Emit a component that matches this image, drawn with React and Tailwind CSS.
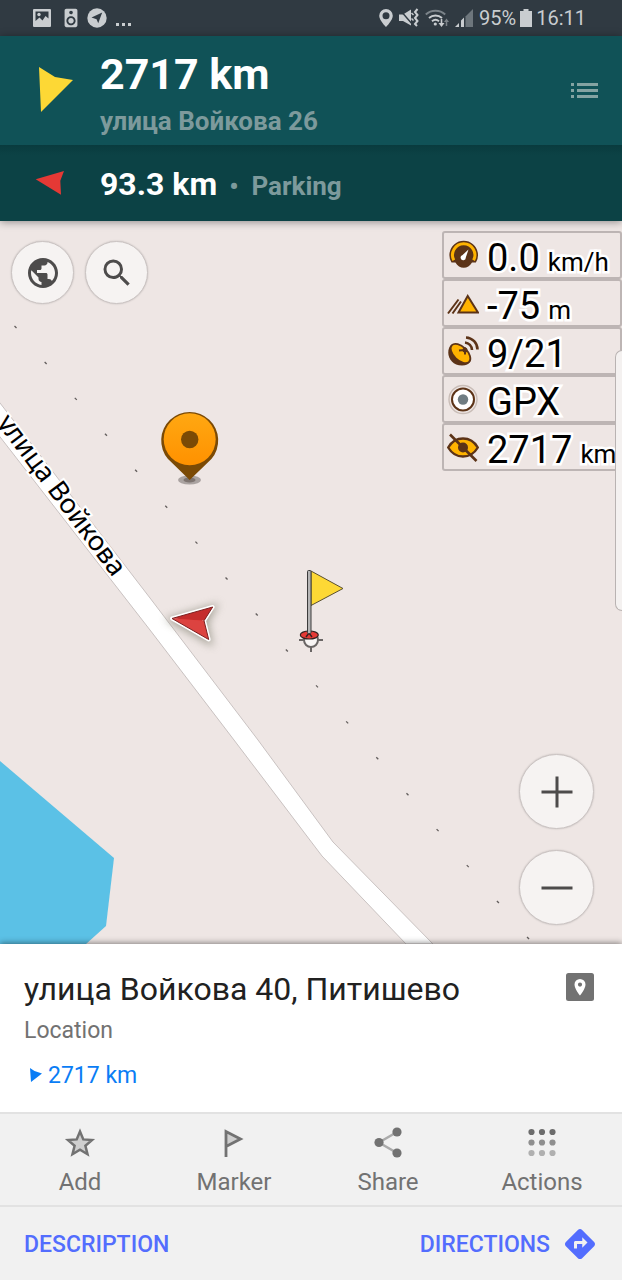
import React from 'react';
import { MdPublic, MdSearch, MdDirections, MdSpeaker } from 'react-icons/md';

const BROWN = '#5c3317';
const AMBER = '#ffb300';

/* Status bar */
const StatusBar = () => (
  <div className="flex h-9 items-center justify-between bg-[#303a42] pl-[33px] pr-9 text-[#c9cdd0]">
    <div className="flex items-center gap-[9px]">
      <svg className="h-5 w-[18px]" viewBox="0 0 18 20">
        <path fillRule="evenodd" fill="currentColor" d="M1 1h16a1 1 0 0 1 1 1v16a1 1 0 0 1-1 1H1a1 1 0 0 1-1-1V2a1 1 0 0 1 1-1zM2.500 3.500V13l4-3.500 3 3 3-4.500 3 2.500v-7z" />
        <circle cx="6" cy="6.500" r="1.700" fill="currentColor" />
      </svg>
      <MdSpeaker className="h-[22px] w-[22px] -mr-1" />
      <svg className="h-5 w-5" viewBox="0 0 20 20">
        <circle cx="10" cy="10" r="9.7" fill="currentColor" />
        <path d="M4.5 9.6L15.2 4.6L11.2 15.3L9.6 11.2Z" fill="#303a42" />
      </svg>
      <svg className="h-5 w-4" viewBox="0 0 16 20" fill="currentColor">
        <rect x="0" y="15" width="3" height="3" />
        <rect x="6" y="15" width="3" height="3" />
        <rect x="12" y="15" width="3" height="3" />
      </svg>
    </div>
    <div className="flex items-center gap-[6px] text-[20px] leading-6">
      <svg className="h-5 w-[14px]" viewBox="0 0 14 20">
        <path fillRule="evenodd" fill="currentColor" d="M7 1a6.8 6.8 0 0 0-6.8 6.8C.2 12.500 7 19 7 19s6.800-6.500 6.800-11.200A6.800 6.800 0 0 0 7 1zM7 4.200a3.500 3.500 0 1 1 0 7a3.500 3.500 0 0 1 0-7z" />
      </svg>
      <svg className="h-5 w-5" viewBox="0 0 20 20">
        <path d="M0 6.500h4L12 1.500v16L4 13H0z" fill="currentColor" />
        <path d="M1 2L14 17" stroke="#303a42" strokeWidth="1.400" />
        <path d="M18.500 1l-2.500 3 2.500 3-2.500 3 2.500 3-2.500 3 2 2" fill="none" stroke="currentColor" strokeWidth="2" />
        <path d="M12.500 5l2 2M12.500 10.500l2 2" fill="none" stroke="currentColor" strokeWidth="1.500" />
      </svg>
      <svg className="h-5 w-6" viewBox="0 0 24 20" fill="none">
        <path d="M.8 6.500a14.500 14.500 0 0 1 19.400 0" stroke="#7b8389" strokeWidth="2" />
        <path d="M4 10a10 10 0 0 1 13 0M7 13.200a5.500 5.500 0 0 1 7 0" stroke="currentColor" strokeWidth="2" />
        <circle cx="10.300" cy="16" r="1.600" fill="currentColor" />
        <path d="M16.500 11v5" stroke="currentColor" strokeWidth="1.600" />
        <path d="M13.500 15h6l-3 4z" fill="currentColor" />
        <path d="M21.500 18v-5" stroke="#7b8389" strokeWidth="1.500" />
        <path d="M19 14h5l-2.500-3.500z" fill="#7b8389" />
      </svg>
      <svg className="h-5 w-[18px]" viewBox="0 0 18 20">
        <path d="M0 19l4-4v4zM6 19v-6.500l3-3V19z" fill="currentColor" />
        <path d="M10.500 19V8.500L18 1v18z" fill="#6d767c" />
      </svg>
      <span>95%</span>
      <svg className="h-5 w-3 -mx-0.5" viewBox="0 0 12 20" fill="currentColor">
        <path d="M3.500 1h5v2H12v16H0V3h3.500z" />
      </svg>
      <span>16:11</span>
    </div>
  </div>
);

const TargetBars = () => (
  <header className="relative z-10 shadow-[0_1px_8px_rgba(0,0,0,0.4)]">
    <div className="flex h-[109px] items-center bg-[#105257]">
      <svg className="ml-[38px] mr-[26px] h-12 w-9 shrink-0" viewBox="0 0 36 48">
        <path d="M1 0L17 10L35 13L3 45Z" fill="#fdd835" />
      </svg>
      <div className="min-w-0 flex-1 pt-2 font-bold">
        <div className="text-[43px] leading-[50px] text-white">2717 km</div>
        <div className="mt-0.5 text-[26px] leading-10 text-[#7d9a9c]">улица Войкова 26</div>
      </div>
      <button type="button" aria-label="Markers list" className="mr-5 flex h-12 w-9 items-center justify-center">
        <svg className="h-4 w-7" viewBox="0 0 28 16" fill="#84a3a2">
          <path d="M1 0h3v3H1zM7 0h21v3H7zM1 6h3v3H1zM7 6h21v3H7zM1 12h3v3H1zM7 12h21v3H7z" />
        </svg>
      </button>
    </div>
    <div className="flex h-[76px] items-center bg-[linear-gradient(#093b3e,#0c4245_10px)]">
      <svg className="ml-[35px] mr-[35px] h-[26px] w-[30px] shrink-0" viewBox="0 0 30 26">
        <path d="M.7 9.300L29 1L25.300 10.700L26 24.700Z" fill="#e53935" />
      </svg>
      <div className="flex items-baseline pt-1 font-bold">
        <span className="text-[32px] leading-10 text-white">93.3 km</span>
        <span className="ml-3 text-[26px] text-[#7d9a9c]">•</span>
        <span className="ml-[13px] text-[26px] text-[#7d9a9c]">Parking</span>
      </div>
    </div>
  </header>
);

/* Map canvas: land, water, road, track dots and pins */
const dots = Array.from({ length: 18 }, (_, i) => ({ x: 15.5 + i * 30.15, y: 327 + i * 35.94 }));

const MapCanvas = () => (
  <svg className="block h-full w-full" viewBox="0 221 622 723" preserveAspectRatio="xMinYMin slice">
    <defs>
      <linearGradient id="pin" x1="0" y1="0" x2="0" y2="1">
        <stop offset="0" stopColor="#ffa812" />
        <stop offset="1" stopColor="#ff9100" />
      </linearGradient>
      <filter id="soft" x="-50%" y="-50%" width="200%" height="200%">
        <feGaussianBlur stdDeviation="4" />
      </filter>
    </defs>
    <rect x="0" y="221" width="622" height="723" fill="#eee6e4" />
    <path d="M0 761L114 858L106 926L86 944H0Z" fill="#5bc1e6" />
    <path d="M-10 390L150 598L258 740L333 842L433 944H406L322 856L234 740L150 630L-10 424Z" fill="#fff" stroke="#c9c2c1" strokeWidth="1" />
    {dots.map((d, i) => (
      <path key={i} d={`M${d.x - 1} ${d.y - 1}l2 2`} stroke="#625d5c" strokeWidth="1.3" />
    ))}
    <text
      transform="translate(113 578) rotate(53)"
      textAnchor="end"
      fontFamily="'Noto Sans', sans-serif"
      fontSize="27"
      fill="#000"
      stroke="#fff"
      strokeWidth="4"
      paintOrder="stroke"
    >
      улица Войкова
    </text>

    {/* Selected point */}
    <ellipse cx="189.500" cy="480" rx="11.500" ry="4.500" fill="#aaa3a1" />
    <ellipse cx="189.500" cy="480" rx="6" ry="2.500" fill="#7d7470" />
    <path d="M189.700 480L168 459A28.500 28.500 0 1 1 211.400 459Z" fill="#7b4a05" />
    <circle cx="189.700" cy="439.300" r="26" fill="url(#pin)" />
    <circle cx="189.700" cy="439.500" r="8.700" fill="#7b4a05" />

    {/* My position */}
    <path d="M172 620L213 608L205 622L209 641Z" fill="#776" stroke="#776" strokeWidth="6" opacity="0.6" filter="url(#soft)" />
    <path d="M172 618.500L212.700 607L204 620.700L208.700 639.500Z" fill="#e53935" stroke="#fff" strokeWidth="4" strokeLinejoin="round" />
    <path d="M172 618.500L212.700 607L204 620.700Z" fill="#c52d2d" />
    <path d="M172 618.500L204 620.700L208.700 639.500Z" fill="#dc4340" />
    <path d="M172 618.500L212.700 607L204 620.700L208.700 639.500Z" fill="none" stroke="#7d2020" strokeWidth="1" />

    {/* Flag marker */}
    <circle cx="311" cy="640" r="7" fill="#fff" fillOpacity="0.600" stroke="#6a6665" strokeWidth="2" />
    <path d="M299 640h6M317 640h6M311 646v6" stroke="#6a6665" strokeWidth="2" />
    <ellipse cx="309.300" cy="635" rx="9" ry="4" fill="#e53935" stroke="#33201f" strokeWidth="1.200" />
    <path d="M306 637l3-4 3 4" fill="none" stroke="#33201f" strokeWidth="1.400" />
    <path d="M311 571L343 588.500L311 605.500Z" fill="#fdd835" stroke="#5a5030" strokeWidth="1" />
    <rect x="307.500" y="570.500" width="3.500" height="63" rx="1" fill="#b5b5b5" stroke="#3b3b3b" strokeWidth="1" />
  </svg>
);

const SpeedIcon = () => (
  <svg className="h-8 w-8 shrink-0" viewBox="0 0 32 32">
    <path d="M4.500 23.500A14.300 14.300 0 1 1 28.900 23.500H25C23 27 20 28.800 16.700 28.800S10.400 27 8.400 23.500Z" fill={BROWN} />
    <path d="M6.800 21.300A11.200 11.200 0 1 1 26.600 21.300" fill="none" stroke={AMBER} strokeWidth="3" />
    <path d="M21.500 10.500L18.800 18.500A2.600 2.600 0 1 1 15.300 16.200Z" fill="#fff" />
  </svg>
);

const AltitudeIcon = () => (
  <svg className="h-8 w-8 shrink-0" viewBox="0 0 32 32">
    <path d="M11.500 25.500L20.700 9L31 25.500Z" fill={AMBER} stroke={BROWN} strokeWidth="2" />
    <path d="M1 26.500L11.500 12.500M5.500 26.500L14 14.500" stroke={BROWN} strokeWidth="2" />
  </svg>
);

const SatelliteIcon = () => (
  <svg className="h-8 w-8 shrink-0" viewBox="0 0 32 32">
    <path d="M3.500 10.500C-2 18 3 30.500 15 30.500C19 30.500 22 29 23.500 26Z" fill={BROWN} />
    <ellipse cx="13.500" cy="18.500" rx="12" ry="6.800" transform="rotate(44 13.500 18.500)" fill={AMBER} stroke={BROWN} strokeWidth="1.800" />
    <path d="M12 15.500l6-.5M18 12.500v7" stroke={BROWN} strokeWidth="2" />
    <circle cx="18" cy="15" r="2.500" fill={BROWN} />
    <path d="M18 7.500a8 8 0 0 1 7 7.500M19 2.500a12 12 0 0 1 11.500 12" fill="none" stroke={BROWN} strokeWidth="2.600" />
  </svg>
);

const GpxIcon = () => (
  <svg className="h-8 w-8 shrink-0" viewBox="0 0 32 32">
    <circle cx="16" cy="16.500" r="14" fill="none" stroke="#c9bdb7" strokeWidth="1.400" />
    <circle cx="16" cy="16.500" r="11" fill="#fff" stroke={BROWN} strokeWidth="2" />
    <circle cx="16" cy="16.500" r="5.200" fill="#6f7c82" />
  </svg>
);

const EyeIcon = () => (
  <svg className="h-8 w-8 shrink-0" viewBox="0 0 32 32">
    <path d="M1.200 16.500C5 10 10 7.500 16 7.500S27 10 30.800 16.500C27 23 22 25.500 16 25.500S5 23 1.200 16.500Z" fill={AMBER} stroke={BROWN} strokeWidth="2.400" />
    <circle cx="16" cy="16.500" r="5" fill={BROWN} />
    <path d="M3 3.500L29.500 30" stroke={BROWN} strokeWidth="2.600" />
  </svg>
);

const widgets = [
  { icon: SpeedIcon, value: '0.0', unit: 'km/h' },
  { icon: AltitudeIcon, value: '-75', unit: 'm' },
  { icon: SatelliteIcon, value: '9/21' },
  { icon: GpxIcon, value: 'GPX' },
  { icon: EyeIcon, value: '2717', unit: 'km' },
];

const WidgetPanel = () => (
  <div className="absolute right-0 top-[10px] w-[180px]">
    {widgets.map(({ icon: Icon, value, unit }) => (
      <div key={value} className="flex h-12 items-center rounded-[3px] border-2 border-[#bdb5b4] bg-[#eee6e4] pl-[3px]">
        <Icon />
        <div className="ml-2 flex items-baseline gap-2 whitespace-nowrap pt-[6px] text-black [-webkit-text-stroke:5px_white] [paint-order:stroke_fill]">
          <span className="text-[38px] leading-10">{value}</span>
          {unit && <span className="text-[26px] leading-8">{unit}</span>}
        </div>
      </div>
    ))}
  </div>
);

const roundButton =
  'flex items-center justify-center rounded-full border border-[#cbc4c3] bg-[#f6f3f2] text-[#4d4b4b] shadow-[0_0_2px_rgba(0,0,0,0.2)]';

/* Context menu */
const actions = [
  {
    label: 'Add',
    icon: (
      <svg className="h-8 w-8" viewBox="0 0 32 32">
        <path d="M16 4.500L19.300 12.400L28 13.100L21.400 18.700L23.500 27.200L16 22.600L8.500 27.200L10.600 18.700L4 13.100L12.700 12.400Z" fill="#cfcfcf" stroke="#727272" strokeWidth="2.500" />
      </svg>
    ),
  },
  {
    label: 'Marker',
    icon: (
      <svg className="h-8 w-8" viewBox="0 0 32 32">
        <path d="M8 30V4.500L22.500 12L8 19.500" fill="#cfcfcf" stroke="#727272" strokeWidth="2.800" />
      </svg>
    ),
  },
  {
    label: 'Share',
    icon: (
      <svg className="h-8 w-8" viewBox="0 0 32 32">
        <path d="M25 5L7 15.500L25 26" fill="none" stroke="#ababab" strokeWidth="2.500" />
        <g fill="#727272">
          <circle cx="25" cy="5" r="4.600" />
          <circle cx="7" cy="15.500" r="4.600" />
          <circle cx="25" cy="26" r="4.600" />
        </g>
      </svg>
    ),
  },
  {
    label: 'Actions',
    icon: (
      <svg className="h-8 w-8" viewBox="0 0 32 32">
        {['#6c6c6c', '#8f8f8f', '#b0b0b0'].map((fill, row) =>
          [5.5, 16, 26.5].map((cx) => <circle key={cx + fill} cx={cx} cy={5 + row * 10.5} r="3.1" fill={fill} />)
        )}
      </svg>
    ),
  },
];

const ContextMenu = () => (
  <section className="relative z-10 bg-white shadow-[0_-1px_6px_rgba(0,0,0,0.45)]">
    <div className="flex justify-between pb-[22px] pl-6 pr-7 pt-[25px]">
      <div>
        <h1 className="text-[32px] leading-10 text-[#212121]">улица Войкова 40, Питишево</h1>
        <p className="mt-2 text-[23px] leading-7 text-[#727272]">Location</p>
        <p className="mt-[17px] flex items-center text-[23px] leading-7 text-[#0a7df5]">
          <svg className="ml-1.5 mr-1.5 h-4 w-3" viewBox="0 0 12 16">
            <path d="M0 0L4.500 3L12 5.500L1 14Z" fill="currentColor" />
          </svg>
          2717 km
        </p>
      </div>
      <svg className="mt-1 h-7 w-7 shrink-0" viewBox="0 0 28 28">
        <rect width="28" height="28" rx="2.500" fill="#727272" />
        <path fillRule="evenodd" fill="#fff" d="M14 6a5.500 5.500 0 0 0-5.500 5.500C8.500 16 14 22.500 14 22.500S19.500 16 19.500 11.500A5.500 5.500 0 0 0 14 6zM14 9.500a2.100 2.100 0 1 1 0 4.200a2.100 2.100 0 0 1 0-4.200z" />
      </svg>
    </div>
    <div className="grid grid-cols-4 border-t-2 border-[#e2e2e2] bg-[#f1f1f1] px-[3px] text-[#727272]">
      {actions.map(({ label, icon }) => (
        <button key={label} type="button" className="flex flex-col items-center gap-[9px] pb-[9px] pt-[13px]">
          {icon}
          <span className="text-[24px] leading-7">{label}</span>
        </button>
      ))}
    </div>
    <div className="flex h-[75px] items-center justify-between border-t-2 border-[#e2e2e2] bg-[#f1f1f1] pl-6 pr-6 text-[23px] font-medium leading-7 text-[#536dfe]">
      <button type="button" className="pt-0.5">DESCRIPTION</button>
      <button type="button" className="flex items-center gap-3">
        <span className="pt-0.5">DIRECTIONS</span>
        <MdDirections className="h-9 w-9" />
      </button>
    </div>
  </section>
);

const App = () => (
  <div className="flex min-h-screen flex-col overflow-hidden bg-[#eee6e4] font-[Roboto,sans-serif]">
    <StatusBar />
    <TargetBars />
    <main className="relative min-h-[560px] flex-1">
      <div className="absolute inset-0 overflow-hidden">
        <MapCanvas />
      </div>
      <div className="absolute left-[11px] top-5 flex gap-[11px]">
        <button type="button" aria-label="Configure map" className={`${roundButton} h-[63px] w-[63px]`}>
          <MdPublic className="h-9 w-9" />
        </button>
        <button type="button" aria-label="Search" className={`${roundButton} h-[63px] w-[63px]`}>
          <MdSearch className="h-9 w-9" />
        </button>
      </div>
      <WidgetPanel />
      <div className="absolute right-0 top-[129px] h-[261px] w-[7px] rounded-l-lg border border-r-0 border-[#b9b3b2] bg-[#f4f1f0]" />
      <div className="absolute bottom-[19px] right-7 flex flex-col gap-[21px]">
        <button type="button" aria-label="Zoom in" className={`${roundButton} h-[75px] w-[75px]`}>
          <svg className="h-8 w-8" viewBox="0 0 32 32" stroke="currentColor" strokeWidth="3">
            <path d="M.5 16h31M16 .5v31" />
          </svg>
        </button>
        <button type="button" aria-label="Zoom out" className={`${roundButton} h-[75px] w-[75px]`}>
          <svg className="h-8 w-8" viewBox="0 0 32 32" stroke="currentColor" strokeWidth="3">
            <path d="M.5 16h31" />
          </svg>
        </button>
      </div>
    </main>
    <ContextMenu />
  </div>
);

export default App;
